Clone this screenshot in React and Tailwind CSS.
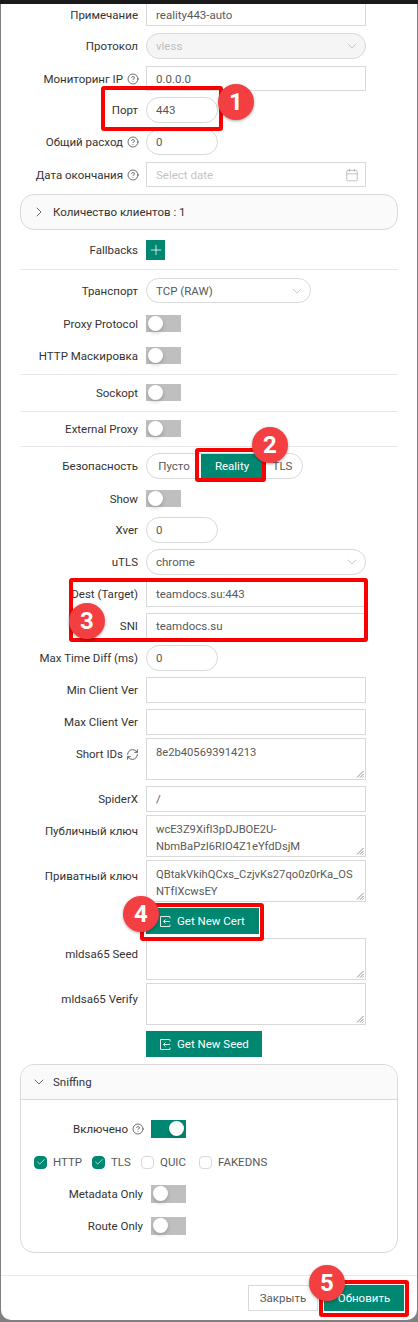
import React from "react";
import { ChevronDown, ChevronRight, Plus, Calendar, CircleHelp, RefreshCw, Check } from "lucide-react";

const T = ({ children }) => <span className="pt-[2px]">{children}</span>;

const Help = () => <CircleHelp size={12} strokeWidth={1.4} className="ml-[4px] -mr-[1px] text-[#333]" />;

const Row = ({ label, icon, mt, h, children, top }) => (
  <div className={`flex ${mt} ${h}`}>
    <div className={`flex w-[137px] shrink-0 justify-end text-[#333] ${top ? "items-start pt-[9px]" : "items-center"}`}>
      <T>{label}</T>
      {icon}
    </div>
    <div className="ml-2 flex min-w-0 flex-1 items-center">{children}</div>
  </div>
);

const Box = ({ w = "w-[220px]", children, icon, round, extra = "" }) => (
  <div className={`flex h-full ${w} items-center border border-[#d9d9d9] px-[9px] ${round ? "rounded-[13px]" : ""} ${extra || "bg-white text-[#595959]"}`}>
    <T>{children}</T>
    {icon}
  </div>
);

const Area = ({ children }) => (
  <div className="relative h-full w-[220px] border border-[#d9d9d9] bg-white px-[9px] pt-[5px] text-[11.2px] leading-[17px] text-[#595959]">
    {children}
    <svg width="8" height="8" viewBox="0 0 8 8" className="absolute bottom-[1px] right-[1px] text-[#8c8c8c]" fill="none" stroke="currentColor" strokeWidth="1">
      <path d="M1 7.5 7.5 1M4 7.5 7.5 4M6.5 7.5 7.5 6.5" />
    </svg>
  </div>
);

const Toggle = ({ on, h = "h-[17px]" }) => (
  <div className={`relative w-[35px] ${h} ${on ? "bg-[#008771]" : "bg-[#bfbfbf]"}`}>
    <div className={`absolute top-[1px] h-[15px] w-[15px] rounded-full bg-white shadow-[0_2px_4px_rgba(0,0,0,0.2)] ${on ? "right-[2px]" : "left-[2px]"}`} />
  </div>
);

const ImportIcon = () => (
  <svg width="11" height="11" viewBox="0 0 11 11" fill="none" stroke="currentColor" strokeWidth="1" className="text-white opacity-85">
    <path d="M10 2.5V.5H.5v10H10v-2M10 5.5H3.5M5.5 3.5l-2 2 2 2" />
  </svg>
);

const GreenBtn = ({ w, children }) => (
  <div className={`flex h-full ${w} items-center bg-[#008771] pl-[14px] text-white`}>
    <ImportIcon />
    <span className="ml-[6px] pt-[2px]">{children}</span>
  </div>
);

const Divider = ({ mt }) => <div className={`mx-[19px] h-px bg-[#e8e8e8] ${mt}`} />;

const CheckItem = ({ on, label, w }) => (
  <div className={`flex items-center ${w}`}>
    <div className={`flex h-[13px] w-[13px] shrink-0 items-center justify-center rounded-[4px] border ${on ? "border-[#008771] bg-[#008771]" : "border-[#d9d9d9] bg-white"}`}>
      {on && <Check size={10} strokeWidth={1.6} className="text-white" />}
    </div>
    <span className="ml-[6px] pt-[2px] text-[#595959]">{label}</span>
  </div>
);

const Badge = ({ n, cls }) => (
  <div className={`absolute flex h-[36px] w-[36px] items-center justify-center rounded-full bg-[#f33f41] text-[24px] font-bold text-white shadow-[0_1px_3px_rgba(0,0,0,0.35)] ${cls}`}>
    {n}
  </div>
);

const RedBox = ({ cls }) => (
  <div className={`absolute rounded-[3px] border-[4px] border-[#fa0000] ${cls}`} />
);

const SniffRow = ({ label, icon, mt, children }) => (
  <div className={`flex h-[18px] items-center ${mt}`}>
    <div className="flex w-[122px] shrink-0 items-center justify-end text-[#333]">
      <T>{label}</T>
      {icon}
    </div>
    <div className="ml-2">{children}</div>
  </div>
);

const Chevron = () => <ChevronDown size={16} strokeWidth={1.2} className="-mr-[4px] text-[#bfbfbf]" />;

export default function App() {
  return (
    <div
      className="relative h-[1322px] w-[418px] overflow-hidden bg-[#808080] text-[11.5px] leading-none"
      style={{ fontFamily: 'Roboto, "Noto Sans", sans-serif' }}
    >
      <div className="h-[4px] bg-[#1a1a1a]" />
      <div className="mx-px flex h-[1316px] flex-col rounded-b-[10px] bg-white">
        <Row label="Примечание" h="h-[22px]"><Box extra="border-t-0 bg-white text-[#595959]">reality443-auto</Box></Row>
        <Row label="Протокол" mt="mt-[7px]" h="h-[26px]">
          <Box round extra="justify-between bg-[#f5f5f5] text-[#bfbfbf]" icon={<Chevron />}>vless</Box>
        </Row>
        <Row label="Мониторинг IP" icon={<Help />} mt="mt-[7px]" h="h-[25px]"><Box>0.0.0.0</Box></Row>
        <Row label="Порт" mt="mt-[6px]" h="h-[26px]"><Box w="w-[72px]" round>443</Box></Row>
        <Row label="Общий расход" icon={<Help />} mt="mt-[6px]" h="h-[26px]"><Box w="w-[72px]" round>0</Box></Row>
        <Row label="Дата окончания" icon={<Help />} mt="mt-[7px]" h="h-[25px]">
          <Box extra="justify-between bg-white text-[#c4c4c4]" icon={<Calendar size={14} strokeWidth={1.2} className="-mr-[3px] text-[#a6a6a6]" />}>Select date</Box>
        </Row>
        <div className="mx-[19px] mt-[7px] flex h-[36px] items-center rounded-[14px] border border-[#d9d9d9] bg-[#fafafa] pl-[10px] text-[#333]">
          <ChevronRight size={16} strokeWidth={1.3} className="text-[#555]" />
          <span className="ml-[6px] pt-[2px]">Количество клиентов : 1</span>
        </div>
        <Row label="Fallbacks" mt="mt-[10px]" h="h-[20px]">
          <div className="flex h-full w-[19px] items-center justify-center bg-[#008771]"><Plus size={16} strokeWidth={1.2} className="text-white" /></div>
        </Row>
        <Divider mt="mt-[9px]" />
        <Row label="Транспорт" mt="mt-[8px]" h="h-[25px]">
          <Box w="w-[165px]" round extra="justify-between bg-white text-[#595959]" icon={<Chevron />}>TCP (RAW)</Box>
        </Row>
        <Row label="Proxy Protocol" mt="mt-[12px]" h="h-[17px]"><Toggle /></Row>
        <Row label="HTTP Маскировка" mt="mt-[15px]" h="h-[17px]"><Toggle /></Row>
        <Divider mt="mt-[10px]" />
        <Row label="Sockopt" mt="mt-[9px]" h="h-[17px]"><Toggle /></Row>
        <Divider mt="mt-[10px]" />
        <Row label="External Proxy" mt="mt-[8px]" h="h-[17px]"><Toggle /></Row>
        <Divider mt="mt-[9px]" />
        <Row label="Безопасность" mt="mt-[6px]" h="h-[26px]">
          <div className="flex h-full w-[157px] items-stretch overflow-hidden rounded-[13px] border border-[#d9d9d9] text-[#595959]">
            <div className="flex w-[54px] items-center justify-center"><T>Пусто</T></div>
            <div className="flex w-[62px] items-center justify-center bg-[#008771] text-white"><T>Reality</T></div>
            <div className="flex flex-1 items-center justify-center"><T>TLS</T></div>
          </div>
        </Row>
        <Row label="Show" mt="mt-[11px]" h="h-[17px]"><Toggle /></Row>
        <Row label="Xver" mt="mt-[10px]" h="h-[26px]"><Box w="w-[72px]" round>0</Box></Row>
        <Row label="uTLS" mt="mt-[6px]" h="h-[26px]">
          <Box round extra="justify-between bg-white text-[#595959]" icon={<Chevron />}>chrome</Box>
        </Row>
        <Row label="Dest (Target)" mt="mt-[6px]" h="h-[26px]"><Box>teamdocs.su:443</Box></Row>
        <Row label="SNI" mt="mt-[6px]" h="h-[26px]"><Box>teamdocs.su</Box></Row>
        <Row label="Max Time Diff (ms)" mt="mt-[6px]" h="h-[26px]"><Box w="w-[72px]" round>0</Box></Row>
        <Row label="Min Client Ver" mt="mt-[6px]" h="h-[26px]"><Box /></Row>
        <Row label="Max Client Ver" mt="mt-[6px]" h="h-[26px]"><Box /></Row>
        <Row label="Short IDs" icon={<RefreshCw size={13} strokeWidth={1.4} className="ml-[3px] mt-[1px] -mr-[1px] text-[#333]" />} mt="mt-[3px]" h="h-[42px]" top>
          <Area>8e2b405693914213</Area>
        </Row>
        <Row label="SpiderX" mt="mt-[6px]" h="h-[26px]"><Box>/</Box></Row>
        <Row label="Публичный ключ" mt="mt-[3px]" h="h-[42px]" top>
          <Area>wcE3Z9XifI3pDJBOE2U-<br />NbmBaPzI6RIO4Z1eYfdDsjM</Area>
        </Row>
        <Row label="Приватный ключ" mt="mt-[3px]" h="h-[42px]" top>
          <Area>QBtakVkihQCxs_CzjvKs27qo0z0rKa_OS<br />NTfIXcwsEY</Area>
        </Row>
        <Row label="" mt="mt-[6px]" h="h-[26px]"><GreenBtn w="w-[113px]">Get New Cert</GreenBtn></Row>
        <Row label="mldsa65 Seed" mt="mt-[4px]" h="h-[42px]" top><Area /></Row>
        <Row label="mldsa65 Verify" mt="mt-[3px]" h="h-[42px]" top><Area /></Row>
        <Row label="" mt="mt-[6px]" h="h-[26px]"><GreenBtn w="w-[116px]">Get New Seed</GreenBtn></Row>

        <div className="mx-[19px] mt-[7px] flex h-[189px] flex-col rounded-[14px] border border-[#d9d9d9]">
          <div className="flex h-[35px] shrink-0 items-center rounded-t-[14px] border-b border-[#d9d9d9] bg-[#fafafa] pl-[10px] text-[#333]">
            <ChevronDown size={16} strokeWidth={1.3} className="text-[#555]" />
            <span className="ml-[6px] pt-[2px]">Sniffing</span>
          </div>
          <SniffRow label="Включено" icon={<Help />} mt="mt-[20px]"><Toggle on h="h-[18px]" /></SniffRow>
          <div className="ml-[13px] mt-[17px] flex h-[14px]">
            <CheckItem on label="HTTP" w="w-[58px]" />
            <CheckItem on label="TLS" w="w-[49px]" />
            <CheckItem label="QUIC" w="w-[58px]" />
            <CheckItem label="FAKEDNS" />
          </div>
          <SniffRow label="Metadata Only" mt="mt-[16px]"><Toggle h="h-[18px]" /></SniffRow>
          <SniffRow label="Route Only" mt="mt-[14px]"><Toggle h="h-[18px]" /></SniffRow>
        </div>

        <div className="mt-[22px] h-px bg-[#e8e8e8]" />
        <div className="mt-[9px] flex h-[26px] justify-end pr-[13px]">
          <div className="flex w-[70px] items-center justify-center border border-[#d9d9d9] text-[#595959]"><T>Закрыть</T></div>
          <div className="ml-[6px] flex w-[80px] items-center justify-center bg-[#008771] text-white"><T>Обновить</T></div>
        </div>
      </div>

      <RedBox cls="left-[101px] top-[86px] h-[45px] w-[122px]" />
      <RedBox cls="left-[195px] top-[448px] h-[34px] w-[71px]" />
      <RedBox cls="left-[69px] top-[578px] h-[64px] w-[299px]" />
      <RedBox cls="left-[140px] top-[903px] h-[38px] w-[124px]" />
      <RedBox cls="left-[319px] top-[1280px] h-[37px] w-[90px]" />
      <Badge n="1" cls="left-[218px] top-[84px]" />
      <Badge n="2" cls="left-[252px] top-[427px]" />
      <Badge n="3" cls="left-[69px] top-[603px]" />
      <Badge n="4" cls="left-[123px] top-[896px]" />
      <Badge n="5" cls="left-[309px] top-[1265px]" />
    </div>
  );
}
